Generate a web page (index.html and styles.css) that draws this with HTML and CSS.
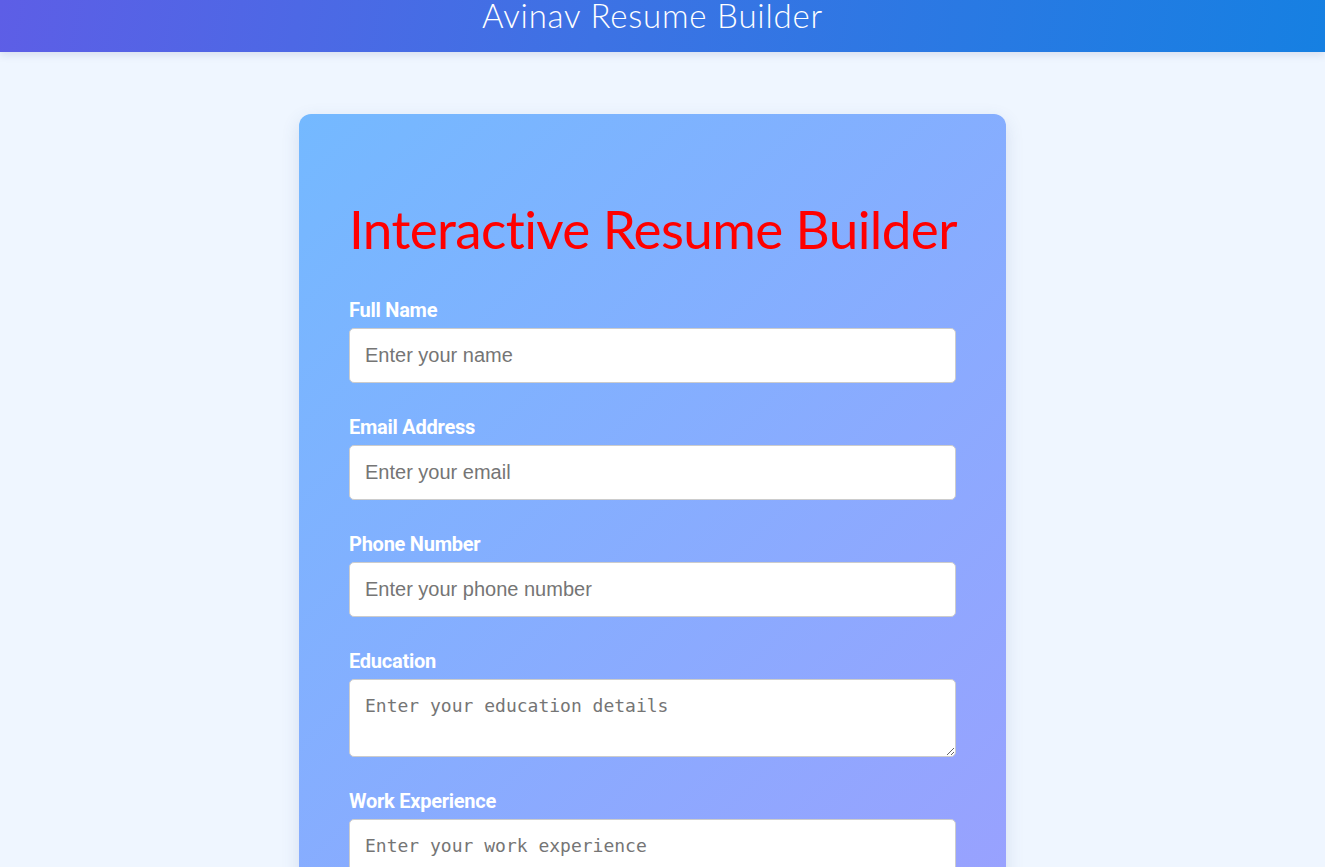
FILE: index.html
```html
<!DOCTYPE html>
<html lang="en">
<head>
<meta charset="utf-8">
<title>Avinav Resume Builder</title>
<link rel="stylesheet" href="styles.css">
</head>
<body>
<header class="topbar">
  <h1 class="brand">Avinav Resume Builder</h1>
</header>
<main class="page">
  <section class="card">
    <h2 class="card-title">Interactive Resume Builder</h2>
    <form class="form">
      <div class="field">
        <label class="label" for="name">Full Name</label>
        <input class="input" id="name" type="text" placeholder="Enter your name">
      </div>
      <div class="field">
        <label class="label" for="email">Email Address</label>
        <input class="input" id="email" type="email" placeholder="Enter your email">
      </div>
      <div class="field">
        <label class="label" for="phone">Phone Number</label>
        <input class="input" id="phone" type="tel" placeholder="Enter your phone number">
      </div>
      <div class="field">
        <label class="label" for="edu">Education</label>
        <textarea class="textarea" id="edu" placeholder="Enter your education details"></textarea>
      </div>
      <div class="field">
        <label class="label" for="work">Work Experience</label>
        <textarea class="textarea" id="work" placeholder="Enter your work experience"></textarea>
      </div>
    </form>
  </section>
</main>
</body>
</html>
```

FILE: styles.css
```css
* { box-sizing: border-box; }
html, body { margin: 0; padding: 0; }
body {
  background: #eff6ff;
  font-family: "Lato", "Noto Sans", sans-serif;
  overflow: hidden;
}
.topbar {
  height: 52px;
  padding-right: 20px;
  background: linear-gradient(100deg, #5d5ee6 0%, #3d72e4 45%, #1680e2 100%);
  box-shadow: 0 3px 8px rgba(40, 60, 120, 0.12);
  display: flex;
  justify-content: center;
  position: relative;
  z-index: 1;
}
.brand {
  margin: 0;
  color: #ffffff;
  font-family: "Lato", sans-serif;
  font-weight: 300;
  font-size: 33px;
  line-height: 30px;
  letter-spacing: 0.8px;
}
.page {
  display: flex;
  justify-content: center;
  padding-top: 62px;
  padding-right: 20px;
}
.card {
  width: 707px;
  min-height: 1150px;
  border-radius: 12px;
  background: linear-gradient(135deg, #74b9ff 0%, #a29bfe 100%);
  box-shadow: 0 6px 18px rgba(60, 90, 150, 0.15);
  padding: 82px 50px 40px;
}
.card-title {
  margin: 0 0 37px;
  color: #ff0000;
  font-family: "Lato", sans-serif;
  font-weight: 400;
  font-size: 53px;
  line-height: 66px;
  letter-spacing: -0.6px;
  white-space: nowrap;
}
.form { display: flex; flex-direction: column; }
.field {
  display: flex;
  flex-direction: column;
  margin-bottom: 33px;
}
.label {
  color: #ffffff;
  font-family: Roboto, "Liberation Sans", sans-serif;
  font-weight: 700;
  font-size: 20px;
  line-height: 22px;
  letter-spacing: -0.25px;
  margin-bottom: 7px;
}
.input, .textarea {
  width: 100%;
  border: 1px solid #cccccc;
  border-radius: 5px;
  background: #ffffff;
  padding: 0 15px;
  color: #333;
}
.input {
  height: 55px;
  font-family: "Liberation Sans", Arial, sans-serif;
  font-size: 20px;
}
.textarea {
  height: 78px;
  padding-top: 15px;
  font-family: "DejaVu Sans Mono", monospace;
  font-size: 18px;
  resize: vertical;
}
.input::placeholder, .textarea::placeholder { color: #757575; }
```
